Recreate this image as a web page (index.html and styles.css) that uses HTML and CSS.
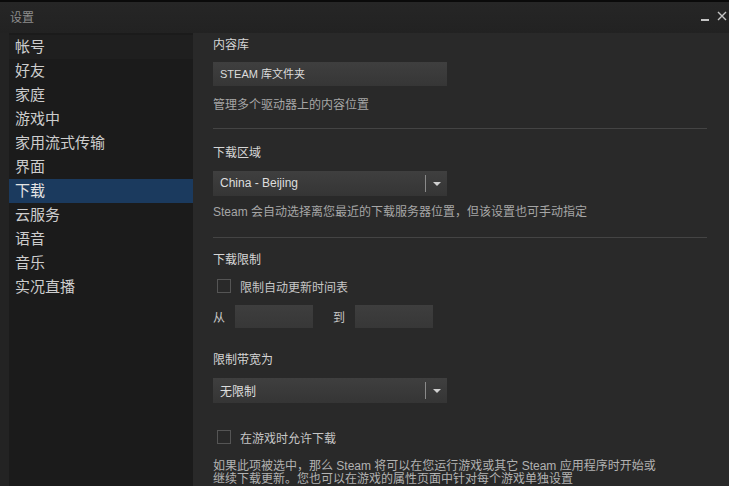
FILE: index.html
```html
<!DOCTYPE html>
<html lang="zh-CN">
<head>
<meta charset="utf-8">
<title>设置</title>
<link rel="stylesheet" href="styles.css">
</head>
<body>
<div class="window">
  <div class="titlebar">
    <span class="title">设置</span>
    <div class="controls">
      <span class="min"></span>
      <svg class="close" width="10" height="10" viewBox="0 0 10 10"><path d="M1 1L9 9M9 1L1 9" stroke="#c4c4c4" stroke-width="1.4" fill="none"/></svg>
    </div>
  </div>
  <div class="body">
    <nav class="sidebar">
      <div class="item hover">帐号</div>
      <div class="item">好友</div>
      <div class="item">家庭</div>
      <div class="item">游戏中</div>
      <div class="item">家用流式传输</div>
      <div class="item">界面</div>
      <div class="item active">下载</div>
      <div class="item">云服务</div>
      <div class="item">语音</div>
      <div class="item">音乐</div>
      <div class="item">实况直播</div>
    </nav>
    <main class="main">
      <div class="label first">内容库</div>
      <div class="button m9">STEAM 库文件夹</div>
      <div class="desc m11">管理多个驱动器上的内容位置</div>
      <div class="divider m15"></div>
      <div class="label m16">下载区域</div>
      <div class="select m10"><span class="val">China - Beijing</span><span class="sep"></span><span class="arrow"></span></div>
      <div class="desc m8">Steam 会自动选择离您最近的下载服务器位置，但该设置也可手动指定</div>
      <div class="divider m17"></div>
      <div class="label m15">下载限制</div>
      <div class="check m10"><span class="box"></span><span>限制自动更新时间表</span></div>
      <div class="range m11">
        <span class="rl">从</span><span class="input"></span>
        <span class="rl to">到</span><span class="input"></span>
      </div>
      <div class="label m24">限制带宽为</div>
      <div class="select m10"><span class="val">无限制</span><span class="sep"></span><span class="arrow"></span></div>
      <div class="check m26"><span class="box"></span><span>在游戏时允许下载</span></div>
      <p class="para">如果此项被选中，那么 Steam 将可以在您运行游戏或其它 Steam 应用程序时开始或<br>继续下载更新。您也可以在游戏的属性页面中针对每个游戏单独设置</p>
    </main>
  </div>
</div>
</body>
</html>
```
FILE: styles.css
```css
html, body {
  margin: 0;
  padding: 0;
  width: 729px;
  height: 486px;
  overflow: hidden;
  background: #232323;
  font-family: "Liberation Sans", "Noto Sans CJK SC", sans-serif;
}
.window {
  height: 486px;
  display: flex;
  flex-direction: column;
  border-top: 2px solid #0a0a0a;
  box-sizing: border-box;
}
.titlebar {
  height: 31px;
  flex: none;
  display: flex;
  align-items: center;
  justify-content: space-between;
  padding: 0 2px 0 10px;
  background: linear-gradient(#262626, #222222);
}
.title {
  font-size: 12px;
  color: #8c8c8c;
  margin-top: -2px;
}
.controls {
  display: flex;
  align-items: center;
  gap: 8px;
  margin-top: -4px;
}
.min {
  width: 8px;
  height: 2px;
  background: #c4c4c4;
  margin-top: 8px;
}
.body {
  flex: 1;
  display: flex;
  padding-left: 9px;
  min-height: 0;
}
.sidebar {
  width: 184px;
  flex: none;
  background: #1b1b1b;
  padding-top: 2px;
}
.item {
  height: 24px;
  line-height: 24px;
  padding-left: 6px;
  font-size: 15px;
  color: #cdcdcd;
}
.item.hover {
  background: #1f1f1f;
}
.item.active {
  background: #1b3a5e;
  color: #e4e4e4;
}
.main {
  flex: 1;
  background: #292929;
  padding: 4px 22px 0 20px;
  display: flex;
  flex-direction: column;
  align-items: flex-start;
}
.label {
  font-size: 12px;
  line-height: 16px;
  color: #d6d6d6;
}
.desc {
  font-size: 12px;
  line-height: 16px;
  color: #a6a6a6;
}
.m8 { margin-top: 8px; }
.m9 { margin-top: 9px; }
.m10 { margin-top: 10px; }
.m11 { margin-top: 11px; }
.m15 { margin-top: 15px; }
.m16 { margin-top: 16px; }
.m17 { margin-top: 17px; }
.m24 { margin-top: 24px; }
.m26 { margin-top: 26px; }
.button {
  width: 234px;
  height: 24px;
  box-sizing: border-box;
  padding-left: 7px;
  line-height: 24px;
  font-size: 11px;
  color: #dcdcdc;
  background: linear-gradient(#3f3f3f, #363636);
}
.divider {
  align-self: stretch;
  height: 1px;
  background: #444444;
}
.select {
  width: 234px;
  height: 25px;
  display: flex;
  align-items: center;
  background: linear-gradient(#3f3f3f, #353535);
  font-size: 12px;
  color: #dedede;
}
.select .val {
  flex: 1;
  padding-left: 7px;
}
.select .sep {
  width: 1px;
  height: 17px;
  background: #8a8a8a;
}
.select .arrow {
  width: 0;
  height: 0;
  border-left: 4px solid transparent;
  border-right: 4px solid transparent;
  border-top: 4px solid #d0d0d0;
  margin: 1px 6px 0 7px;
}
.check {
  display: flex;
  align-items: center;
  height: 16px;
  font-size: 12px;
  color: #c6c6c6;
}
.check .box {
  width: 14px;
  height: 14px;
  box-sizing: border-box;
  border: 1px solid #555555;
  margin: 0 9px 0 4px;
}
.range {
  display: flex;
  align-items: center;
  font-size: 12px;
  color: #c6c6c6;
}
.range .rl {
  width: 22px;
}
.range .to {
  margin-left: 20px;
}
.input {
  width: 78px;
  height: 23px;
  background: linear-gradient(#3e3e3e, #373737);
}
.para {
  margin: 15px 0 0 0;
  font-size: 12px;
  line-height: 13px;
  color: #b2b2b2;
  white-space: nowrap;
}
```
